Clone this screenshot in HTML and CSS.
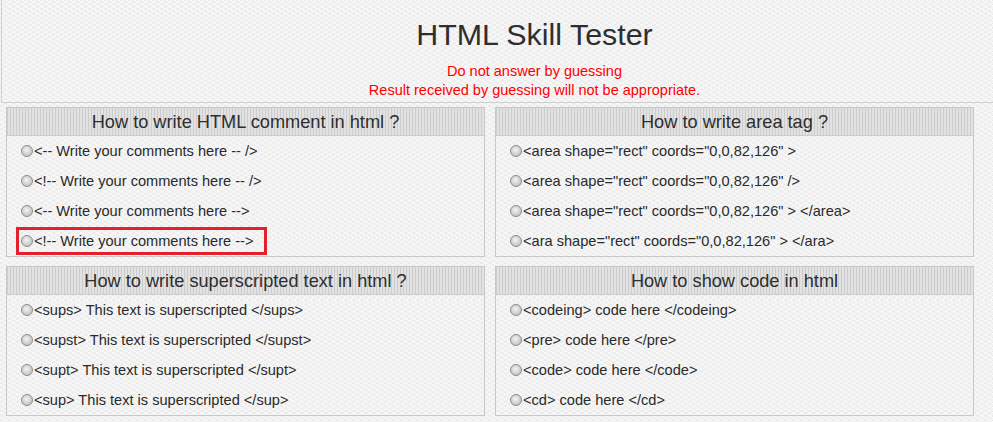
FILE: index.html
```html
<!DOCTYPE html>
<html>
<head>
<meta charset="utf-8">
<title>HTML Skill Tester</title>
<link rel="stylesheet" href="styles.css">
</head>
<body>
<header class="top">
  <h1 class="title">HTML Skill Tester</h1>
  <p class="warn">Do not answer by guessing</p>
  <p class="warn">Result received by guessing will not be appropriate.</p>
</header>
<main class="grid">
  <section class="card">
    <h2 class="card-head">How to write HTML comment in html ?</h2>
    <div class="opts">
      <div class="opt"><label><input type="radio" name="q1">&lt;-- Write your comments here -- /&gt;</label></div>
      <div class="opt"><label><input type="radio" name="q1">&lt;!-- Write your comments here -- /&gt;</label></div>
      <div class="opt"><label><input type="radio" name="q1">&lt;-- Write your comments here --&gt;</label></div>
      <div class="opt"><label class="selected"><input type="radio" name="q1">&lt;!-- Write your comments here --&gt;</label></div>
    </div>
  </section>
  <section class="card">
    <h2 class="card-head">How to write area tag ?</h2>
    <div class="opts">
      <div class="opt"><label><input type="radio" name="q2">&lt;area shape="rect" coords="0,0,82,126" &gt;</label></div>
      <div class="opt"><label><input type="radio" name="q2">&lt;area shape="rect" coords="0,0,82,126" /&gt;</label></div>
      <div class="opt"><label><input type="radio" name="q2">&lt;area shape="rect" coords="0,0,82,126" &gt; &lt;/area&gt;</label></div>
      <div class="opt"><label><input type="radio" name="q2">&lt;ara shape="rect" coords="0,0,82,126" &gt; &lt;/ara&gt;</label></div>
    </div>
  </section>
  <section class="card">
    <h2 class="card-head">How to write superscripted text in html ?</h2>
    <div class="opts">
      <div class="opt"><label><input type="radio" name="q3">&lt;sups&gt; This text is superscripted &lt;/sups&gt;</label></div>
      <div class="opt"><label><input type="radio" name="q3">&lt;supst&gt; This text is superscripted &lt;/supst&gt;</label></div>
      <div class="opt"><label><input type="radio" name="q3">&lt;supt&gt; This text is superscripted &lt;/supt&gt;</label></div>
      <div class="opt"><label><input type="radio" name="q3">&lt;sup&gt; This text is superscripted &lt;/sup&gt;</label></div>
    </div>
  </section>
  <section class="card">
    <h2 class="card-head">How to show code in html</h2>
    <div class="opts">
      <div class="opt"><label><input type="radio" name="q4">&lt;codeing&gt; code here &lt;/codeing&gt;</label></div>
      <div class="opt"><label><input type="radio" name="q4">&lt;pre&gt; code here &lt;/pre&gt;</label></div>
      <div class="opt"><label><input type="radio" name="q4">&lt;code&gt; code here &lt;/code&gt;</label></div>
      <div class="opt"><label><input type="radio" name="q4">&lt;cd&gt; code here &lt;/cd&gt;</label></div>
    </div>
  </section>
</main>
</body>
</html>
```
FILE: styles.css
```css
html, body {
  margin: 0;
  padding: 0;
}
body {
  font-family: "Liberation Sans", Arial, sans-serif;
  color: #333;
  background-color: #f2f2f2;
  background-image:
    repeating-linear-gradient(30deg, rgba(255,255,255,0.6) 0 1px, transparent 1px 4px),
    repeating-linear-gradient(150deg, rgba(220,220,220,0.4) 0 1px, transparent 1px 4px);
  width: 993px;
  height: 422px;
  overflow: hidden;
}
.top {
  height: 103px;
  box-sizing: border-box;
  margin-left: 1px;
  border-left: 1px solid #d0d0d0;
  border-bottom: 1px solid #cfcfcf;
  padding-left: 74px;
  padding-top: 17px;
  text-align: center;
}
.title {
  margin: 0;
  font-size: 30.4px;
  line-height: 34px;
  font-weight: normal;
  color: #2e2e2e;
}
.warn {
  margin: 0;
  font-size: 14.5px;
  line-height: 19px;
  color: #ff0000;
}
.title + .warn {
  margin-top: 11px;
}
.grid {
  display: grid;
  grid-template-columns: 1fr 1fr;
  gap: 9px 10px;
  width: 968px;
  margin: 4px 0 0 6px;
}
.card {
  border: 1px solid #c8c8c8;
}
.card-head {
  margin: 0;
  height: 27px;
  line-height: 29px;
  overflow: hidden;
  font-size: 18.2px;
  font-weight: normal;
  text-align: center;
  color: #2e2e2e;
  background-color: #dcdcdc;
  background-image: repeating-linear-gradient(90deg, #cdcdcd 0 1px, #e2e2e2 1px 3px);
  border-bottom: 1px solid #cdcdcd;
}
.opts {
  display: flex;
  flex-direction: column;
}
.opt {
  height: 30px;
  display: flex;
  align-items: center;
  padding-left: 9px;
}
.opt label {
  display: inline-flex;
  align-items: center;
  height: 22px;
  padding: 0 10px 0 2px;
  border: 3px solid transparent;
  font-size: 14.6px;
  color: #2a2a2a;
  white-space: pre;
}
.opt label.selected {
  border-color: #e3202b;
}
.opt input {
  -webkit-appearance: none;
  appearance: none;
  width: 12px;
  height: 12px;
  margin: 0 1px 0 0;
  border: 1px solid #8c8c8c;
  border-radius: 50%;
  box-sizing: border-box;
  background: radial-gradient(circle at 45% 40%, #f4f4f4 0, #d6d6d6 45%, #b8b8b8 100%);
}
```
